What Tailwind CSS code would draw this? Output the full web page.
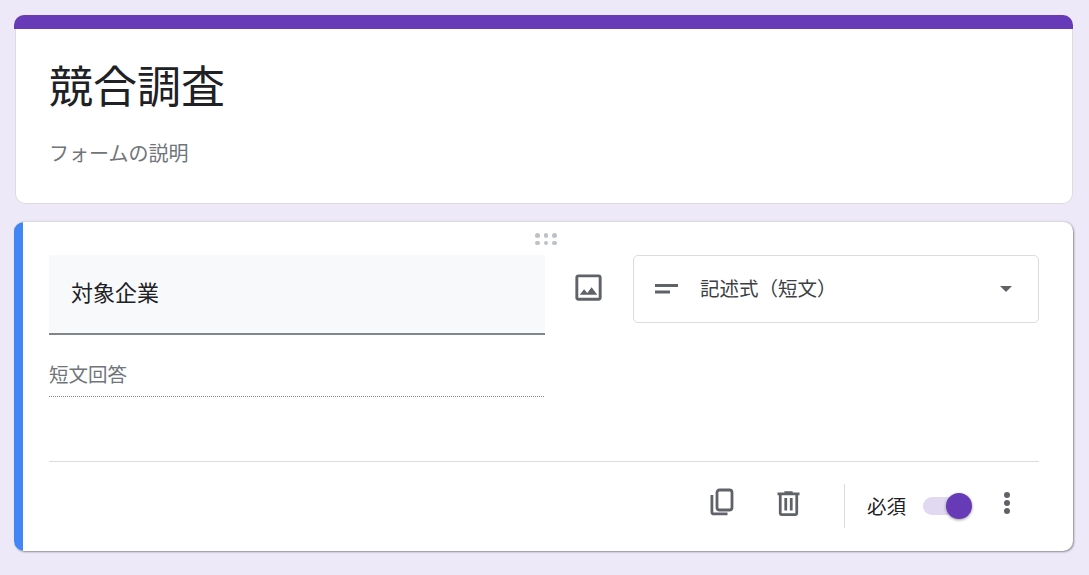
<!DOCTYPE html>
<html lang="ja">
<head>
<meta charset="utf-8">
<title>競合調査</title>
<script src="https://cdn.jsdelivr.net/npm/@tailwindcss/browser@4"></script>
</head>
<body class="m-0 h-[575px] overflow-hidden bg-[#ede9f8] font-['Noto_Sans_CJK_JP','Noto_Sans',sans-serif]">
<main class="flex flex-col gap-[17px] pl-[14px] pr-[16px] pt-[15px]">
  <section class="flex h-[189px] flex-col overflow-hidden rounded-[10px]">
    <div class="h-[14px] shrink-0 bg-[#673ab7]"></div>
    <div class="ml-px flex grow flex-col rounded-b-[10px] border-x border-b border-[#dadce0] bg-white pl-[33px]">
      <h1 class="mt-[25px] text-[44px] leading-[60px] font-normal text-[#202124]">競合調査</h1>
      <p class="mt-[25px] text-[20px] leading-[28px] text-[#70757a]">フォームの説明</p>
    </div>
  </section>
  <section class="relative flex h-[330px] overflow-hidden rounded-[10px] border-t border-[#dadce0] bg-white shadow-[1px_1px_2px_rgba(60,64,67,0.55)]">
    <div class="w-[9px] shrink-0 bg-[#4285f4]"></div>
    <div class="relative flex grow flex-col pl-[26px] pr-[34px]">
      <div class="absolute left-[512px] top-[11px] grid grid-cols-3 gap-x-[4px] gap-y-[3px]">
        <i class="size-[4.500px] rounded-full bg-[#bdc1c6]"></i><i class="size-[4.500px] rounded-full bg-[#bdc1c6]"></i><i class="size-[4.500px] rounded-full bg-[#bdc1c6]"></i>
        <i class="size-[4.500px] rounded-full bg-[#bdc1c6]"></i><i class="size-[4.500px] rounded-full bg-[#bdc1c6]"></i><i class="size-[4.500px] rounded-full bg-[#bdc1c6]"></i>
      </div>
      <div class="mt-[33px] flex">
        <div class="w-[496px] shrink-0">
          <div class="flex h-[80px] items-center border-b-2 border-[#80868b] bg-[#f8f9fa] pb-[6px] pl-[22px] text-[22px] text-[#202124]">対象企業</div>
          <div class="mt-[26px] flex h-[36px] w-[495px] items-center border-b border-dotted border-[#80868b] pb-[9px] text-[19.500px] text-[#70757a]">短文回答</div>
        </div>
        <div class="flex w-[88px] shrink-0 justify-center pr-[2px] pt-[15px]">
          <svg class="size-[35px]" viewBox="0 0 24 24" fill="#5f6368"><path d="M19 5v14H5V5h14m0-2H5c-1.100 0-2 .9-2 2v14c0 1.100.9 2 2 2h14c1.100 0 2-.9 2-2V5c0-1.100-.9-2-2-2zm-4.860 8.860-3 3.870L9 13.140 6 17h12l-3.860-5.140z"/></svg>
        </div>
        <div class="flex h-[68px] grow items-center rounded-[5px] border border-[#dadce0] pl-[21px] pr-[26px]">
          <svg class="h-[10px] w-[24px] shrink-0" viewBox="0 0 24 10"><rect x="0" y="0" width="23" height="3" fill="#5f6368"/><rect x="0" y="6.500" width="15" height="3" fill="#5f6368"/></svg>
          <span class="ml-[21px] grow pb-[3px] text-[19.500px] text-[#3c4043]">記述式（短文）</span>
          <span class="size-0 border-x-[6px] border-t-[6px] border-x-transparent border-t-[#5f6368]"></span>
        </div>
      </div>
      <div class="mt-auto flex h-[90px] items-center border-t border-[#dadce0] pb-[2px]">
        <div class="ml-auto flex items-center">
          <svg class="-mt-[5px] size-[30px]" viewBox="0 0 30 30" fill="none" stroke="#5f6368" stroke-width="2.800"><rect x="9" y="2" width="15" height="20" rx="2.500"/><path d="M3.900 7V23.900a2 2 0 0 0 2 2H19.500"/></svg>
          <svg class="-mt-[5px] ml-[34px] size-[33px]" viewBox="0 0 24 24" fill="#5f6368"><path d="M15 4V3H9v1H4v2h1v13c0 1.100.9 2 2 2h10c1.100 0 2-.9 2-2V6h1V4h-5zm2 15H7V6h10v13zM9 8h2v9H9zm4 0h2v9h-2z"/></svg>
          <div class="ml-[39px] h-[44px] w-px bg-[#dadce0]"></div>
          <span class="ml-[22px] mt-px text-[19.500px] text-[#202124]">必須</span>
          <div class="relative ml-[17px] h-[18px] w-[38px] rounded-full bg-[#e1d8f1]">
            <span class="absolute right-[-11px] top-[-4px] size-[26px] rounded-full bg-[#673ab7] shadow-[0_1px_3px_rgba(0,0,0,0.4)]"></span>
          </div>
          <svg class="-mt-[6px] ml-[34px] mr-[20px] h-[30px] w-[24px]" viewBox="0 0 24 30" fill="#5f6368"><circle cx="12" cy="7" r="3"/><circle cx="12" cy="15" r="3"/><circle cx="12" cy="23" r="3"/></svg>
        </div>
      </div>
    </div>
  </section>
</main>
</body>
</html>
